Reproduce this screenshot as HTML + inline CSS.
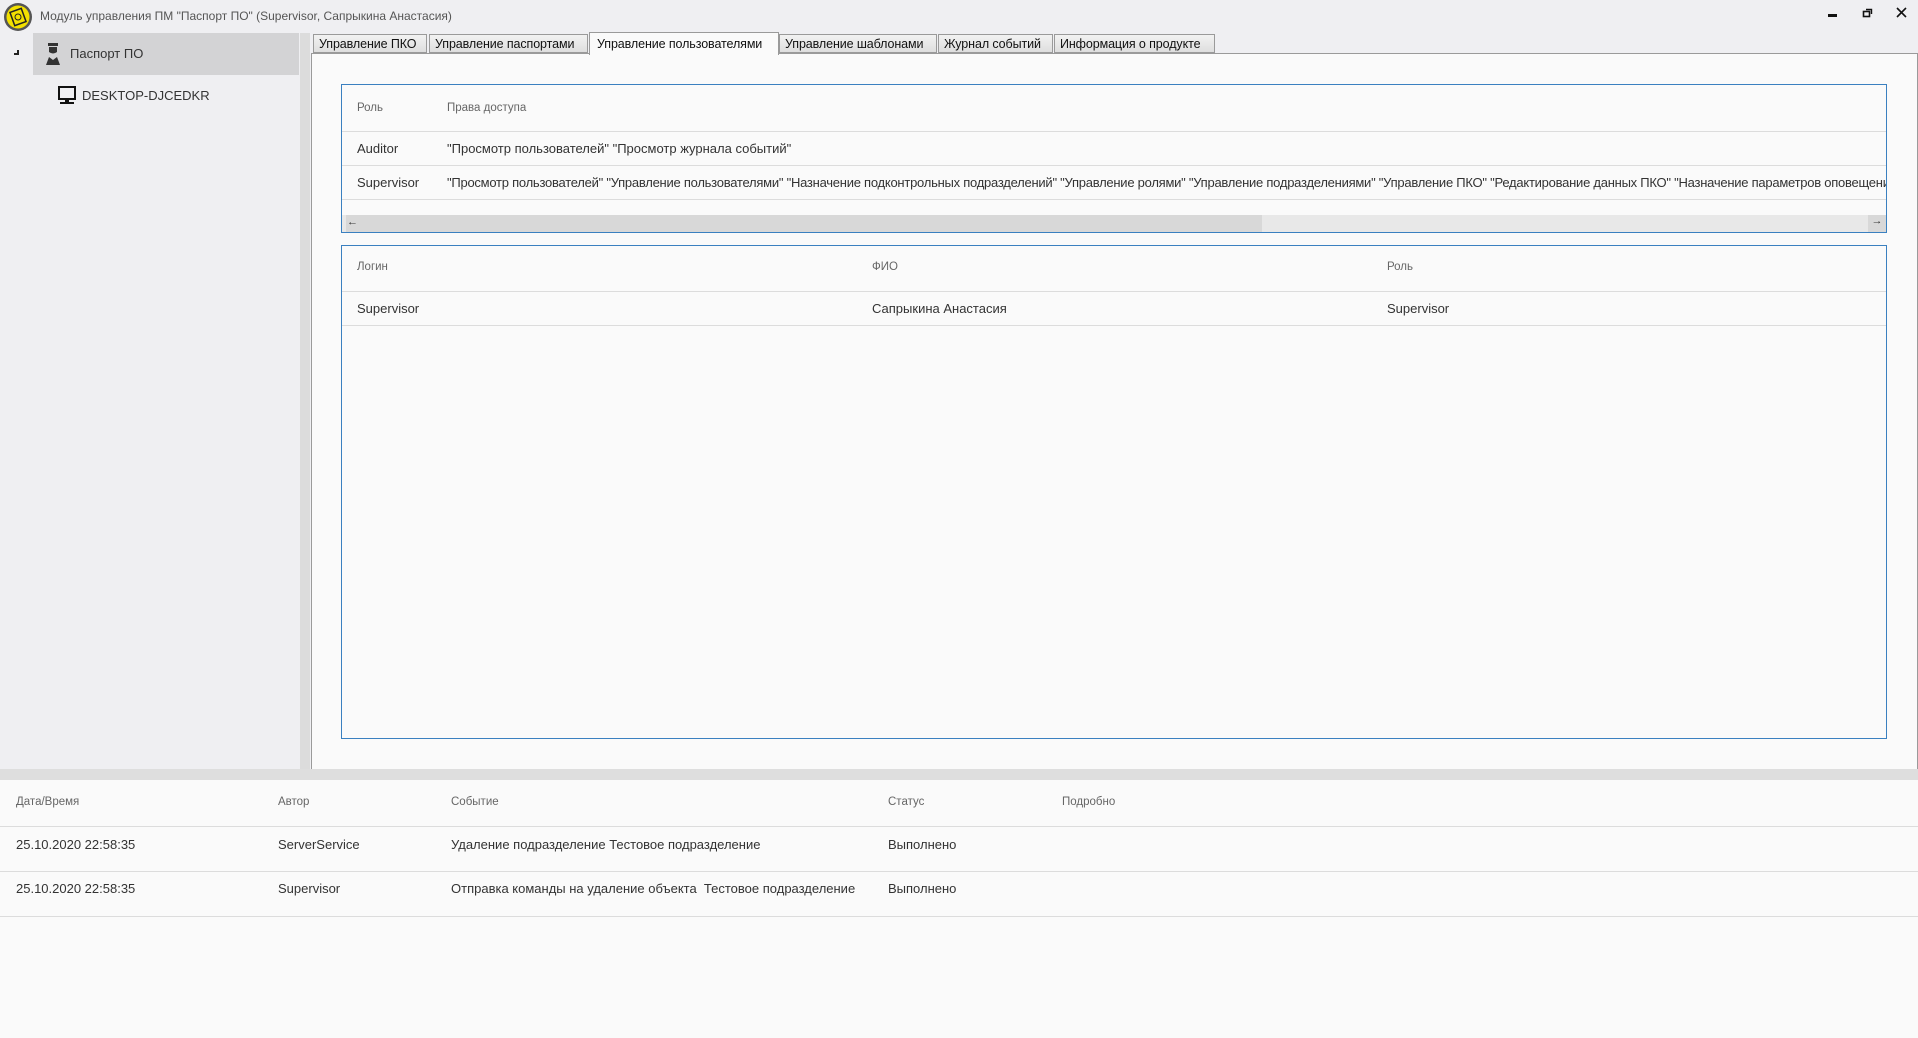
<!DOCTYPE html>
<html><head><meta charset="utf-8"><style>
*{margin:0;padding:0;box-sizing:border-box}
body{width:1918px;height:1038px;overflow:hidden;background:#efeff2;font-family:"Liberation Sans",sans-serif;color:#333;position:relative}
.a{position:absolute;white-space:nowrap}
.t{font-size:13px;color:#333}
.h{font-size:11.5px;color:#666}
.line{position:absolute;height:1px;background:#dcdcdc}
.tab{position:absolute;top:34px;height:19px;border:1px solid #9a9a9a;background:linear-gradient(#f2f2f2,#dedede);font-size:12.5px;color:#111;padding:2px 0 0 5px;white-space:nowrap;overflow:hidden;letter-spacing:-0.1px}
</style></head><body>
<!-- title bar -->
<svg class="a" style="left:3px;top:2px" width="30" height="30" viewBox="0 0 30 30"><circle cx="15" cy="15" r="14" fill="#555"/><circle cx="15" cy="15" r="11.5" fill="#f2e000"/><rect x="9" y="8" width="12" height="14" transform="rotate(-20 15 15)" fill="none" stroke="#222" stroke-width="1.5"/><circle cx="15" cy="15" r="3" fill="none" stroke="#222"/></svg>
<div class="a" style="left:40px;top:9px;font-size:12px;color:#555">Модуль управления ПМ "Паспорт ПО" (Supervisor, Сапрыкина Анастасия)</div>
<div class="a" style="left:1828px;top:14px;width:9px;height:3px;background:#111"></div>
<svg class="a" style="left:1862px;top:7px" width="11" height="11"><rect x="1.5" y="4.5" width="6" height="5" fill="none" stroke="#111" stroke-width="1.6"/><path d="M4 2.5H9.5V7" fill="none" stroke="#111" stroke-width="1.4"/></svg>
<svg class="a" style="left:1896px;top:7px" width="11" height="11"><path d="M1 1L10 10M10 1L1 10" stroke="#111" stroke-width="1.6"/></svg>
<!-- sidebar -->
<div class="a" style="left:33px;top:33px;width:266px;height:42px;background:#d3d3d5"></div>
<div class="a" style="left:14px;top:50px;width:5px;height:5px;border-right:2px solid #222;border-bottom:2px solid #222"></div>
<svg class="a" style="left:44px;top:40px" width="18" height="26" viewBox="0 0 18 26"><path d="M4 3L14 3L14 6L4 6Z" fill="#333"/><path d="M5 7H13V12Q9 15 5 12Z" fill="#333"/><path d="M2 25L5 17L9 20L13 17L16 25Z" fill="#333"/></svg>
<div class="a t" style="left:70px;top:46px">Паспорт ПО</div>
<svg class="a" style="left:57px;top:86px" width="20" height="19" viewBox="0 0 20 19"><rect x="2" y="1" width="16" height="12" fill="none" stroke="#111" stroke-width="2"/><rect x="8" y="13" width="4" height="3" fill="#111"/><rect x="3" y="16" width="14" height="2" fill="#111"/></svg>
<div class="a t" style="left:82px;top:88px">DESKTOP-DJCEDKR</div>
<div class="a" style="left:300px;top:33px;width:10px;height:736px;background:#dcdcdc"></div>
<!-- tabs -->
<div class="tab" style="left:313px;width:114px">Управление ПКО</div>
<div class="tab" style="left:429px;width:159px">Управление паспортами</div>
<div class="tab" style="left:779px;width:158px">Управление шаблонами</div>
<div class="tab" style="left:938px;width:115px">Журнал событий</div>
<div class="tab" style="left:1054px;width:161px">Информация о продукте</div>
<div class="a" style="left:311px;top:53px;width:1607px;height:717px;background:#fafafa;border:1px solid #9a9a9a"></div>
<div class="a" style="left:589px;top:32px;width:190px;height:23px;background:#fafafa;border:1px solid #9a9a9a;border-bottom:none;font-size:12.5px;color:#111;padding:4px 0 0 7px;overflow:hidden;letter-spacing:-0.1px">Управление пользователями</div>
<!-- table1 -->
<div class="a" style="left:341px;top:84px;width:1546px;height:149px;border:1px solid #3a80c0;background:#fafafa;overflow:hidden">
<div class="a h" style="left:15px;top:17px">Роль</div>
<div class="a h" style="left:105px;top:17px">Права доступа</div>
<div class="line" style="left:0;top:46px;width:100%"></div>
<div class="a t" style="left:15px;top:56px">Auditor</div>
<div class="a t" style="left:105px;top:56px">"Просмотр пользователей" "Просмотр журнала событий"</div>
<div class="line" style="left:0;top:80px;width:100%"></div>
<div class="a t" style="left:15px;top:90px">Supervisor</div>
<div class="a t" style="left:105px;top:90px;letter-spacing:-0.25px">"Просмотр пользователей" "Управление пользователями" "Назначение подконтрольных подразделений" "Управление ролями" "Управление подразделениями" "Управление ПКО" "Редактирование данных ПКО" "Назначение параметров оповещений"</div>
<div class="line" style="left:0;top:114px;width:100%"></div>
<div class="a" style="left:0;top:130px;width:100%;height:18px;background:#e8e8e8"></div>
<div class="a" style="left:4px;top:130px;width:916px;height:18px;background:#d8d8d8"></div>
<div class="a" style="left:5px;top:131px;font-size:11px;color:#333">←</div>
<div class="a" style="left:1526px;top:130px;width:18px;height:18px;background:#d8d8d8;font-size:11px;text-align:center;color:#333">→</div>
</div>
<!-- table2 -->
<div class="a" style="left:341px;top:245px;width:1546px;height:494px;border:1px solid #3a80c0;background:#fafafa">
<div class="a h" style="left:15px;top:15px">Логин</div>
<div class="a h" style="left:530px;top:15px">ФИО</div>
<div class="a h" style="left:1045px;top:15px">Роль</div>
<div class="line" style="left:0;top:45px;width:100%"></div>
<div class="a t" style="left:15px;top:55px">Supervisor</div>
<div class="a t" style="left:530px;top:55px">Сапрыкина Анастасия</div>
<div class="a t" style="left:1045px;top:55px">Supervisor</div>
<div class="line" style="left:0;top:79px;width:100%"></div>
</div>
<!-- bottom -->
<div class="a" style="left:0;top:769px;width:1918px;height:11px;background:#dedede"></div>
<div class="a" style="left:0;top:780px;width:1918px;height:258px;background:#fafafa">
<div class="a h" style="left:16px;top:16px">Дата/Время</div>
<div class="a h" style="left:278px;top:16px">Автор</div>
<div class="a h" style="left:451px;top:16px">Событие</div>
<div class="a h" style="left:888px;top:16px">Статус</div>
<div class="a h" style="left:1062px;top:16px">Подробно</div>
<div class="line" style="left:0;top:46px;width:100%"></div>
<div class="a t" style="left:16px;top:57px">25.10.2020 22:58:35</div>
<div class="a t" style="left:278px;top:57px">ServerService</div>
<div class="a t" style="left:451px;top:57px">Удаление подразделение Тестовое подразделение</div>
<div class="a t" style="left:888px;top:57px">Выполнено</div>
<div class="line" style="left:0;top:91px;width:100%"></div>
<div class="a t" style="left:16px;top:101px">25.10.2020 22:58:35</div>
<div class="a t" style="left:278px;top:101px">Supervisor</div>
<div class="a t" style="left:451px;top:101px">Отправка команды на удаление объекта&nbsp; Тестовое подразделение</div>
<div class="a t" style="left:888px;top:101px">Выполнено</div>
<div class="line" style="left:0;top:136px;width:100%"></div>
</div>
</body></html>
